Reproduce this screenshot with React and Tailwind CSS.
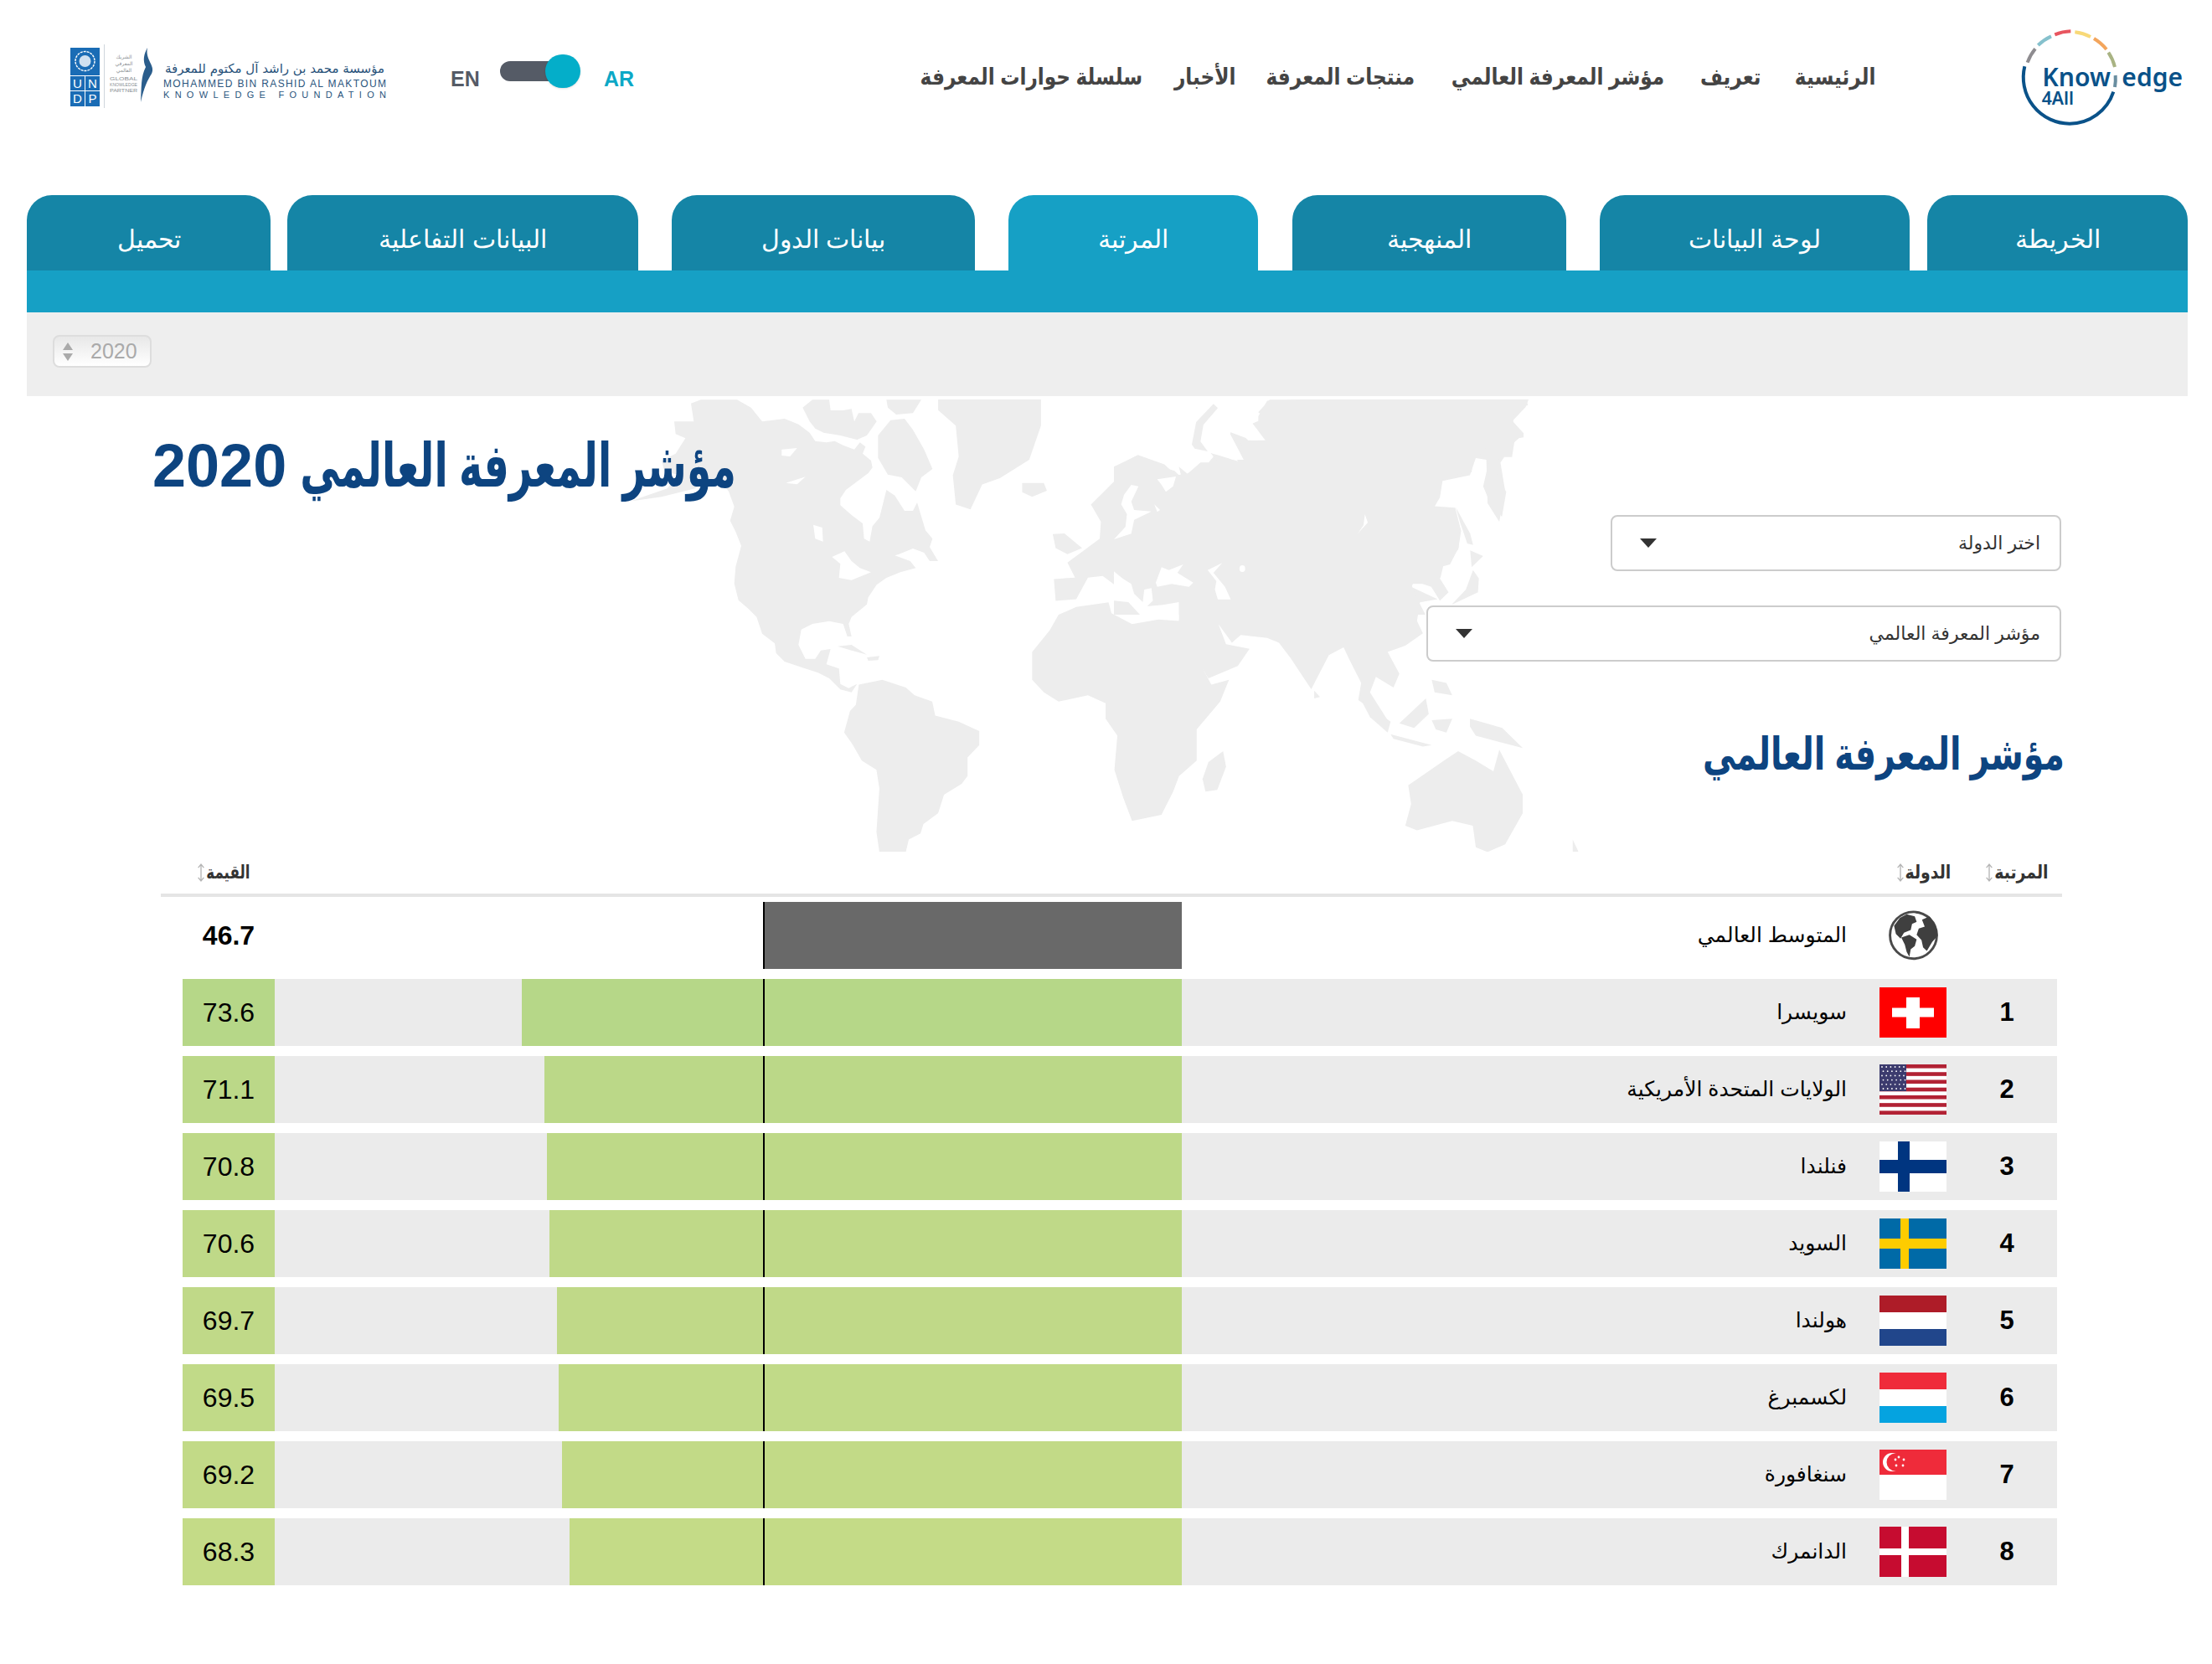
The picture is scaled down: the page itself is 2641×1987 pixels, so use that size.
const navItems = [
  { label: "الرئيسية", width: "w-[98px]" },
  { label: "تعريف", width: "w-[72px]" },
  { label: "مؤشر المعرفة العالمي", width: "w-[261px]" },
  { label: "منتجات المعرفة", width: "w-[177px]" },
  { label: "الأخبار", width: "w-[67px]" },
  { label: "سلسلة حوارات المعرفة", width: "w-[268px]" },
];

const tabs = [
  { label: "الخريطة", width: "w-[311px]", gap: "" },
  { label: "لوحة البيانات", width: "w-[370px]", gap: "ms-[21px]" },
  { label: "المنهجية", width: "w-[327px]", gap: "ms-[40px]" },
  { label: "المرتبة", width: "w-[298px]", gap: "ms-[41px]", active: true },
  { label: "بيانات الدول", width: "w-[362px]", gap: "ms-[40px]" },
  { label: "البيانات التفاعلية", width: "w-[419px]", gap: "ms-[40px]" },
  { label: "تحميل", width: "w-[291px]", gap: "ms-[20px]" },
];

const rows = [
  { rank: 1, name: "سويسرا", value: 73.6, color: "bg-[#b6d788]", flag: "ch" },
  { rank: 2, name: "الولايات المتحدة الأمريكية", value: 71.1, color: "bg-[#bbd888]", flag: "us" },
  { rank: 3, name: "فنلندا", value: 70.8, color: "bg-[#bed988]", flag: "fi" },
  { rank: 4, name: "السويد", value: 70.6, color: "bg-[#bfd988]", flag: "se" },
  { rank: 5, name: "هولندا", value: 69.7, color: "bg-[#c0d988]", flag: "nl" },
  { rank: 6, name: "لكسمبرغ", value: 69.5, color: "bg-[#c1da88]", flag: "lu" },
  { rank: 7, name: "سنغافورة", value: 69.2, color: "bg-[#c2da87]", flag: "sg" },
  { rank: 8, name: "الدانمرك", value: 68.3, color: "bg-[#c4db87]", flag: "dk" },
];

// 10.7px per index point
const PX_PER_POINT = 10.7;

// the installed arabic face runs wider than the one in the design
function Squeezed({ width, scale, children }) {
  return (
    <span className={`inline-flex shrink-0 justify-center whitespace-nowrap ${width}`}>
      <span className={`inline-block shrink-0 ${scale}`}>{children}</span>
    </span>
  );
}

function Flag({ code }) {
  const stripes = [];
  if (code === "us") {
    for (let i = 0; i < 7; i++) stripes.push(<rect key={i} x="0" y={i * 9.23} width="80" height="4.62" fill="#b22234" />);
  }
  const stars = [];
  if (code === "us") {
    for (let r = 0; r < 6; r++) for (let c = 0; c < 6; c++) stars.push(<circle key={`${r}-${c}`} cx={3 + c * 5.2 + (r % 2) * 1.5} cy={3 + r * 5.2} r="0.9" fill="#fff" />);
  }
  return (
    <svg width="80" height="60" viewBox="0 0 80 60" className="block">
      {code === "ch" && (
        <>
          <rect width="80" height="60" fill="#ff0000" />
          <rect x="15" y="24.5" width="50" height="11" fill="#fff" />
          <rect x="32" y="12" width="16" height="37" fill="#fff" />
        </>
      )}
      {code === "us" && (
        <>
          <rect width="80" height="60" fill="#fff" />
          {stripes}
          <rect width="32" height="32" fill="#3c3b6e" />
          {stars}
        </>
      )}
      {code === "fi" && (
        <>
          <rect width="80" height="60" fill="#fff" />
          <rect x="22" width="14" height="60" fill="#003580" />
          <rect y="22" width="80" height="16" fill="#003580" />
        </>
      )}
      {code === "se" && (
        <>
          <rect width="80" height="60" fill="#006aa7" />
          <rect x="25" width="10" height="60" fill="#fecc00" />
          <rect y="24" width="80" height="12" fill="#fecc00" />
        </>
      )}
      {code === "nl" && (
        <>
          <rect width="80" height="20" fill="#ae1c28" />
          <rect y="20" width="80" height="20" fill="#fff" />
          <rect y="40" width="80" height="20" fill="#21468b" />
        </>
      )}
      {code === "lu" && (
        <>
          <rect width="80" height="20" fill="#ef2b3a" />
          <rect y="20" width="80" height="20" fill="#fff" />
          <rect y="40" width="80" height="20" fill="#05a3e0" />
        </>
      )}
      {code === "sg" && (
        <>
          <rect width="80" height="30" fill="#ef2b3a" />
          <rect y="30" width="80" height="30" fill="#fff" />
          <circle cx="15" cy="15" r="11" fill="#fff" />
          <circle cx="19" cy="15" r="10.5" fill="#ef2b3a" />
          <g fill="#fff">
            <circle cx="23" cy="9" r="1.4" />
            <circle cx="29" cy="12" r="1.4" />
            <circle cx="28" cy="19" r="1.4" />
            <circle cx="19" cy="12" r="1.4" />
            <circle cx="20" cy="19" r="1.4" />
          </g>
        </>
      )}
      {code === "dk" && (
        <>
          <rect width="80" height="60" fill="#c60c30" />
          <rect x="26" width="9" height="60" fill="#fff" />
          <rect y="26" width="80" height="8" fill="#fff" />
        </>
      )}
    </svg>
  );
}

function Globe() {
  return (
    <svg width="61" height="60" viewBox="905 78 190 185" className="block">
      <circle cx="1000" cy="170" r="87" fill="#fff" stroke="#4a4a4a" strokeWidth="9" />
      <g fill="#3f3f3f">
        <path d="M928,135 L950,105 L975,92 L1005,100 L1012,120 L995,128 L990,150 L965,160 L952,182 L935,165 Z" />
        <path d="M955,178 L985,168 L1012,185 L1005,210 L990,222 L985,250 L975,232 L968,205 Z" />
        <path d="M1032,112 L1060,100 L1078,125 L1088,150 L1090,172 L1070,195 L1050,228 L1036,215 L1030,188 L1012,168 L1020,145 L1042,138 Z" />
      </g>
    </svg>
  );
}

function SortIcon() {
  return (
    <svg width="10" height="28" viewBox="0 0 12 28" className="block" fill="none" stroke="#b5b5b5" strokeWidth="1.6">
      <path d="M6,2 V26 M2,7 L6,2 L10,7 M2,21 L6,26 L10,21" />
    </svg>
  );
}

function Caret() {
  return (
    <svg width="20" height="11" viewBox="0 0 20 11" className="block">
      <path d="M0,0 H20 L10,11 Z" fill="#333" />
    </svg>
  );
}

function WorldMap() {
  return (
    <svg viewBox="740 477 1160 540" className="absolute left-[740px] top-[4px] w-[1160px] h-[540px]">
      {/* outlines traced by eye, first group in the scale of the americas crop */}
      <g transform="translate(740 470) scale(0.33333)" fill="#ededed">
        <path d="M255,35 L290,22 L420,22 L470,50 L510,100 L590,90 L615,100 L640,110 L680,140 L700,170 L740,175 L770,170 L800,185 L840,200 L860,175 L880,190 L870,215 L900,240 L905,265 L890,285 L850,315 L810,345 L790,375 L790,400 L830,435 L870,465 L875,520 L895,530 L905,475 L930,445 L940,405 L955,345 L985,365 L1020,420 L1050,420 L1065,390 L1080,440 L1095,490 L1120,520 L1110,550 L1140,600 L1110,600 L1090,570 L1050,555 L1000,575 L985,580 L1040,600 L1060,625 L1005,640 L955,660 L920,685 L890,730 L885,755 L830,800 L820,825 L830,870 L815,870 L800,825 L750,815 L690,825 L650,845 L640,900 L665,950 L700,950 L720,920 L755,915 L740,970 L785,985 L790,1040 L820,1055 L850,1040 L830,1070 L790,1060 L750,1020 L710,1000 L650,980 L590,960 L560,930 L555,895 L510,860 L490,800 L460,770 L425,740 L410,680 L415,620 L435,545 L415,495 L395,455 L410,405 L390,350 L350,300 L270,340 L150,370 L40,385 L170,340 L210,290 L160,280 L150,240 L200,215 L235,160 L200,145 L195,100 L265,100 Z" />
        <path d="M655,50 L690,22 L750,22 L755,60 L800,60 L830,55 L840,100 L855,70 L900,70 L920,100 L885,150 L850,165 L790,150 L730,140 L700,125 L680,100 Z" />
        <path d="M925,150 L970,95 L1020,90 L1050,130 L1090,200 L1120,270 L1080,300 L1060,350 L1010,300 L960,290 L925,230 Z" />
        <path d="M955,22 L1080,22 L1050,70 L990,75 L960,50 Z" />
        <path d="M780,905 L830,900 L885,935 L830,920 Z" />
        <path d="M885,945 L930,940 L925,955 L890,957 Z" />
      </g>
      <g transform="translate(740 470) scale(0.33333)" fill="#ffffff">
        <path d="M760,585 L805,565 L830,600 L860,625 L900,640 L830,668 L785,660 L790,610 Z" />
        <path d="M580,200 L635,195 L610,225 L580,222 Z" />
        <path d="M595,320 L665,298 L635,325 Z" />
        <path d="M693,470 L725,480 L728,530 L700,520 Z" />
      </g>
      {/* rest of the world, scale of the wide map crop */}
      <g transform="translate(850 460) scale(0.70153 0.37037)" fill="#ededed">
        <path d="M385,45 L560,45 L560,130 L540,240 L490,300 L460,320 L440,400 L415,385 L410,290 L420,230 L415,130 L385,80 Z" />
        <path d="M528,315 L565,315 L570,340 L545,360 L528,345 Z" />
        <path d="M250,965 L290,950 L330,975 L345,1000 L375,1020 L380,1065 L420,1085 L455,1115 L455,1160 L435,1200 L435,1260 L425,1285 L395,1320 L385,1380 L360,1415 L355,1445 L335,1465 L330,1505 L285,1505 L280,1440 L285,1300 L280,1240 L255,1210 L240,1160 L225,1120 L235,1050 L245,1030 Z" />
        <path d="M870,1180 L875,1230 L860,1305 L840,1310 L835,1270 L845,1215 Z" />
        <path d="M585,695 L582,625 L618,620 L605,572 L635,530 L660,495 L662,440 L645,385 L690,300 L690,260 L725,225 L770,255 L790,290 L810,285 L845,250 L860,215 L885,240 L905,240 L880,150 L930,185 L930,100 L945,50 L1020,45 L1390,45 L1385,70 L1360,120 L1380,160 L1365,185 L1342,250 L1350,340 L1340,440 L1320,380 L1318,240 L1300,235 L1290,290 L1240,310 L1230,390 L1265,395 L1275,470 L1270,530 L1245,580 L1240,620 L1200,620 L1190,650 L1235,690 L1205,700 L1200,760 L1210,800 L1180,840 L1150,860 L1170,930 L1160,975 L1130,940 L1120,990 L1150,1080 L1100,1015 L1105,960 L1085,885 L1075,845 L1050,870 L1020,980 L985,880 L965,830 L945,815 L900,805 L885,830 L862,770 L875,835 L915,850 L895,905 L845,945 L830,900 L800,840 L790,790 L795,755 L795,705 L750,690 L735,650 L720,700 L700,650 L680,605 L710,680 L690,650 L665,615 L640,620 L620,690 Z" />
        <path d="M580,480 L600,478 L630,525 L605,545 L585,525 Z" />
        <path d="M1170,1090 L1215,1010 L1220,1060 L1195,1105 Z" />
        <path d="M1105,1015 L1155,1085 L1150,1120 L1120,1070 Z" />
        <path d="M1155,1125 L1225,1160 L1210,1165 L1160,1140 Z" />
        <path d="M1225,1080 L1260,1075 L1250,1120 L1232,1110 Z" />
        <path d="M1290,1075 L1345,1105 L1380,1170 L1340,1150 L1300,1130 L1290,1100 Z" />
        <path d="M1225,950 L1250,960 L1260,1000 L1230,990 Z" />
        <path d="M1185,1290 L1250,1205 L1270,1180 L1300,1210 L1330,1245 L1340,1175 L1380,1320 L1380,1380 L1350,1480 L1320,1505 L1300,1490 L1295,1420 L1260,1405 L1200,1435 L1180,1420 L1190,1350 Z" />
        <path d="M1025,985 L1035,1005 L1025,1010 Z" />
        <path d="M1465,1465 L1475,1505 L1465,1505 Z" />
      </g>
      {/* northern eurasia, scale of the close crop */}
      <g transform="translate(1330 474) scale(0.34439 0.33333)">
        <path fill="#ededed" d="M0,250 L80,210 L120,235 L210,265 L235,290 L225,250 L255,275 L300,235 L360,235 L335,200 L430,230 L470,260 L480,235 L460,205 L440,165 L465,155 L525,155 L480,95 L525,75 L500,55 L540,10 L1430,10 L1435,30 L1380,40 L1385,90 L1420,130 L1420,145 L1390,150 L1380,215 L1340,215 L1320,240 L1330,290 L1360,340 L1345,430 L1300,370 L1280,320 L1300,230 L1290,180 L1280,205 L1245,210 L1240,270 L1195,275 L1140,295 L1130,360 L1110,395 L1180,405 L1200,470 L1195,540 L1165,600 L1130,610 L1130,650 L1160,700 L1130,730 L1100,680 L1070,670 L1030,670 L1050,720 L1080,780 L0,780 Z" />
        <g fill="#ffffff">
          <path d="M360,40 L500,55 L480,95 L525,155 L465,155 L440,130 L405,115 L400,180 L430,230 L335,200 L300,160 L310,100 Z" />
          <path d="M150,295 L215,285 L205,320 L180,340 L165,315 Z" />
          <path d="M145,665 L165,610 L190,620 L240,600 L220,630 L275,665 L260,680 L200,670 L150,680 Z" />
          <path d="M325,620 L375,595 L345,630 L385,680 L405,725 L360,725 L350,690 L355,660 Z" />
          <ellipse cx="445" cy="615" rx="10" ry="12" />
          <path d="M870,420 L880,450 L845,490 L865,460 Z" />
          <path d="M60,315 L85,320 L60,375 L70,405 L130,410 L70,440 L60,490 L0,510 L40,465 L45,420 L25,385 L35,350 Z" />
          <path d="M140,385 L160,405 L150,412 Z" />
          <path d="M0,625 L30,650 L60,670 L70,705 L100,735 L105,690 L130,685 L135,730 L115,750 L170,745 L225,735 L225,780 L90,780 L50,735 L0,730 Z" />
        </g>
        <g fill="#ededed">
          <path d="M345,25 L360,40 L310,100 L300,160 L325,195 L280,185 L270,170 L285,90 Z" />
          <path d="M1185,395 L1235,490 L1245,530 L1225,525 L1200,450 Z" />
          <path d="M1235,550 L1280,570 L1240,610 Z" />
          <path d="M1245,620 L1265,650 L1262,700 L1190,735 L1170,745 L1220,690 Z" />
        </g>
      </g>
      {/* africa goes last so the mediterranean patch does not bite it */}
      <g transform="translate(850 460) scale(0.70153 0.37037)" fill="#ededed">
        <path d="M590,740 L620,715 L675,700 L680,735 L715,770 L760,755 L795,760 L800,800 L820,860 L840,930 L850,965 L880,950 L865,1020 L825,1110 L825,1210 L795,1260 L785,1310 L765,1385 L715,1405 L700,1330 L685,1240 L690,1130 L670,1075 L670,1025 L640,1000 L590,1020 L565,990 L545,950 L545,860 L575,790 Z" />
      </g>
    </svg>
  );
}

function UndpLogo() {
  return (
    <svg viewBox="80 50 385 80" className="block w-[385px] h-[80px]">
      <rect x="84" y="57" width="35" height="70" fill="#1a6cb5" />
      <rect x="84" y="90" width="35" height="1" fill="#fff" />
      <rect x="84" y="108" width="35" height="1" fill="#fff" />
      <rect x="101" y="91" width="1" height="36" fill="#fff" />
      <circle cx="101.5" cy="73" r="11.5" fill="none" stroke="#fff" strokeWidth="1.4" strokeDasharray="3 1" />
      <circle cx="101.5" cy="73" r="7" fill="#cfe0f0" />
      <g fill="#fff" fontFamily="'Liberation Sans'" fontSize="15" textAnchor="middle">
        <text x="92.5" y="105">U</text>
        <text x="110.5" y="105">N</text>
        <text x="92.5" y="123">D</text>
        <text x="110.5" y="123">P</text>
      </g>
      <rect x="124" y="53" width="1" height="76" fill="#cfd6dc" />
      <g fill="#8a8f94" fontFamily="'Liberation Sans'" fontSize="5.5" textAnchor="start">
        <text x="131" y="96" textLength="33" lengthAdjust="spacingAndGlyphs" style={{ direction: "ltr" }}>GLOBAL</text>
        <text x="131" y="103" textLength="33" lengthAdjust="spacingAndGlyphs" style={{ direction: "ltr" }}>KNOWLEDGE</text>
        <text x="131" y="110" textLength="33" lengthAdjust="spacingAndGlyphs" style={{ direction: "ltr" }}>PARTNER</text>
      </g>
      <g fill="#8a8f94" fontFamily="'DejaVu Sans'" fontSize="6" textAnchor="middle">
        <text x="148" y="70">الشريك</text>
        <text x="148" y="78">المعرفي</text>
        <text x="148" y="86">العالمي</text>
      </g>
      <path d="M176,57 C173,72 186,78 181,88 C176,96 172,104 168,122 C169,104 168,92 174,80 C170,72 172,64 176,57 Z" fill="#2a5d8c" />
      <text x="328" y="87" textAnchor="middle" fill="#28527a" fontFamily="'DejaVu Sans'" fontSize="15">مؤسسة محمد بن راشد آل مكتوم للمعرفة</text>
      <g fill="#2a557d" fontFamily="'Liberation Sans'">
        <text x="195" y="104" fontSize="12" textLength="266" lengthAdjust="spacing" style={{ direction: "ltr" }}>MOHAMMED BIN RASHID AL MAKTOUM</text>
        <text x="195" y="117" fontSize="11" textLength="266" lengthAdjust="spacing" style={{ direction: "ltr" }}>KNOWLEDGE FOUNDATION</text>
      </g>
    </svg>
  );
}

function K4aLogo() {
  return (
    <svg viewBox="450 81 660 390" className="block w-[220px] h-[130px]" fill="none" style={{ direction: "ltr" }}>
      <g strokeWidth="12">
        <path d="M512,224 A166,166 0 0 1 540,175" stroke="#8e8c90" />
        <path d="M550,162 A166,166 0 0 1 597,130" stroke="#86c1cd" />
        <path d="M610,124 A166,166 0 0 1 667,112" stroke="#e8555f" />
        <path d="M682,115 A166,166 0 0 1 738,132" stroke="#f8d978" />
        <path d="M750,138 A166,166 0 0 1 795,177" stroke="#f3a55c" />
        <path d="M802,188 A166,166 0 0 1 825,240" stroke="#a9b383" />
        <path d="M827,270 A166,166 0 0 1 825,312" stroke="#6a8ea0" />
        <path d="M820,329 A166,166 0 0 1 663,443 A166,166 0 0 1 502,238" stroke="#0a5289" />
      </g>
      <g fill="#0a5289" fontFamily="'Noto Sans'" fontWeight="600">
        <text x="565" y="310" fontSize="90" textLength="245" lengthAdjust="spacingAndGlyphs">Know</text>
        <text x="850" y="310" fontSize="90" textLength="218" lengthAdjust="spacingAndGlyphs">edge</text>
        <text x="563" y="375" fontSize="62" textLength="115" lengthAdjust="spacingAndGlyphs">4All</text>
      </g>
    </svg>
  );
}

function Select({ label, width }) {
  return (
    <div className={`flex h-[67px] items-center justify-between rounded-lg border-2 border-[#cccccc] bg-white pl-[33px] pr-[23px] text-[22px] text-[#333333] ${width}`}>
      <span>{label}</span>
      <Caret />
    </div>
  );
}

function Row({ row }) {
  return (
    <div className="flex h-[80px] items-center bg-[#ebebeb] text-black">
      <div className="w-[132px] pl-[12px] text-center text-[31px] font-bold font-['Liberation_Sans']">{row.rank}</div>
      <div className="w-[80px]"><Flag code={row.flag} /></div>
      <div className="w-[833px] pr-[39px] text-[25px]">{row.name}</div>
      <div className="flex h-full w-[1083px]">
        <div className={`relative h-full ${row.color}`} style={{ width: row.value * PX_PER_POINT }}>
          <div className="absolute right-[498px] top-0 h-full w-[2px] bg-black" />
        </div>
      </div>
      <div className={`flex h-full w-[110px] items-center justify-center text-[32px] font-['Liberation_Sans'] ${row.color}`}>{row.value.toFixed(1)}</div>
    </div>
  );
}

export default function App() {
  return (
    <div dir="rtl" className="w-[2641px] min-h-[1987px] overflow-hidden bg-white font-['Liberation_Sans','DejaVu_Sans',sans-serif]">
      <header className="flex h-[233px] items-start pr-[21px]">
        <div className="mt-[27px] shrink-0"><K4aLogo /></div>
        <nav className="ms-[160px] mt-[70px] flex h-[44px] w-[1149px] shrink-0 items-center gap-[40px] text-[27px] font-bold text-[#444444]">
          {navItems.map((item) => (
            <Squeezed key={item.label} width={item.width} scale="scale-x-[.86]">{item.label}</Squeezed>
          ))}
        </nav>
        <div dir="ltr" className="mr-[334px] mt-[65px] flex w-[219px] shrink-0 items-start text-[25px] font-bold font-['Liberation_Sans']">
          <span className="mt-[14px] w-[60px] leading-[30px] text-[#555b66]">EN</span>
          <div className="relative h-[40px] w-[97px]">
            <div className="mt-[8px] h-[24px] w-[70px] rounded-full bg-[#555b66]" />
            <div className="absolute right-0 top-0 h-[40px] w-[42px] rounded-full bg-[#04aec9] shadow" />
          </div>
          <span className="ml-[28px] mt-[14px] leading-[30px] text-[#0ca8c6]">AR</span>
        </div>
        <div className="ms-[73px] mt-[50px] shrink-0"><UndpLogo /></div>
      </header>

      <div className="ml-[32px] mr-[29px] flex h-[90px]">
        {tabs.map((tab) => (
          <div
            key={tab.label}
            className={`flex items-center justify-center rounded-t-[30px] pt-[14px] text-[30px] font-light text-white ${tab.width} ${tab.gap} ${tab.active ? "bg-[#16a0c5]" : "bg-[#1585a6]"}`}
          >
            {tab.label}
          </div>
        ))}
      </div>
      <div className="ml-[32px] mr-[29px] h-[50px] bg-[#16a0c5]" />
      <div className="ml-[32px] mr-[29px] flex h-[100px] items-start justify-end bg-[#eeeeee] pl-[31px] pt-[27px]">
        <div dir="ltr" className="flex h-[39px] w-[118px] items-center rounded-lg border-2 border-[#dddddd] bg-gradient-to-b from-[#e8e8e8] to-white pl-[10px] text-[25px] text-[#aaaaaa] font-['Liberation_Sans']">
          <svg width="12" height="22" viewBox="0 0 12 22" className="mr-[21px] block" fill="#aaaaaa">
            <path d="M6,0 L12,9 H0 Z M0,13 H12 L6,22 Z" />
          </svg>
          2020
        </div>
      </div>

      <main className="relative">
        <WorldMap />
        <div className="relative">
          <div className="flex h-[142px] items-center justify-end pl-[182px] pt-[24px]">
            <h1 className="flex items-center gap-[18px] text-[72px] font-bold leading-none text-[#0d4480]">
              <Squeezed width="w-[516px]" scale="scale-x-[.66]">مؤشر المعرفة العالمي</Squeezed>
              <span className="font-['Liberation_Sans']">2020</span>
            </h1>
          </div>
          <div className="flex flex-col items-start gap-[41px] pr-[180px]">
            <Select label="اختر الدولة" width="w-[538px]" />
            <Select label="مؤشر المعرفة العالمي" width="w-[758px]" />
          </div>
          <h2 className="mt-[70px] h-[80px] pr-[177px] text-[54px] font-bold leading-[80px] text-[#0d4480]">
            <Squeezed width="w-[430px]" scale="scale-x-[.73]">مؤشر المعرفة العالمي</Squeezed>
          </h2>

          <div className="ml-[192px] mr-[179px] flex h-[131px] items-end border-b-4 border-[#e5e5e5] pb-[9px] pr-[17px] text-[22px] font-bold text-[#333333]">
            <div className="flex w-[116px] items-center gap-[1px]">
              <Squeezed width="w-[64px]" scale="scale-x-[.86]">المرتبة</Squeezed><SortIcon />
            </div>
            <div className="flex flex-1 items-center gap-[1px]">
              <Squeezed width="w-[54px]" scale="scale-x-[.86]">الدولة</Squeezed><SortIcon />
            </div>
            <div className="flex items-center gap-[1px] pl-[43px]">
              <Squeezed width="w-[52px]" scale="scale-x-[.76]">القيمة</Squeezed><SortIcon />
            </div>
          </div>

          <div className="ml-[218px] mr-[185px] mt-[6px] flex flex-col gap-[12px] pb-[87px]">
            <div className="flex h-[80px] items-center text-black">
              <div className="w-[132px]" />
              <div className="flex w-[80px] justify-center"><Globe /></div>
              <div className="w-[833px] pr-[39px] text-[25px]">المتوسط العالمي</div>
              <div className="flex h-full w-[1083px]">
                <div className="h-full w-[500px] border-l-2 border-black bg-[#696969]" />
              </div>
              <div className="w-[110px] text-center text-[32px] font-bold font-['Liberation_Sans']">46.7</div>
            </div>
            {rows.map((row) => <Row key={row.rank} row={row} />)}
          </div>
        </div>
      </main>
    </div>
  );
}
